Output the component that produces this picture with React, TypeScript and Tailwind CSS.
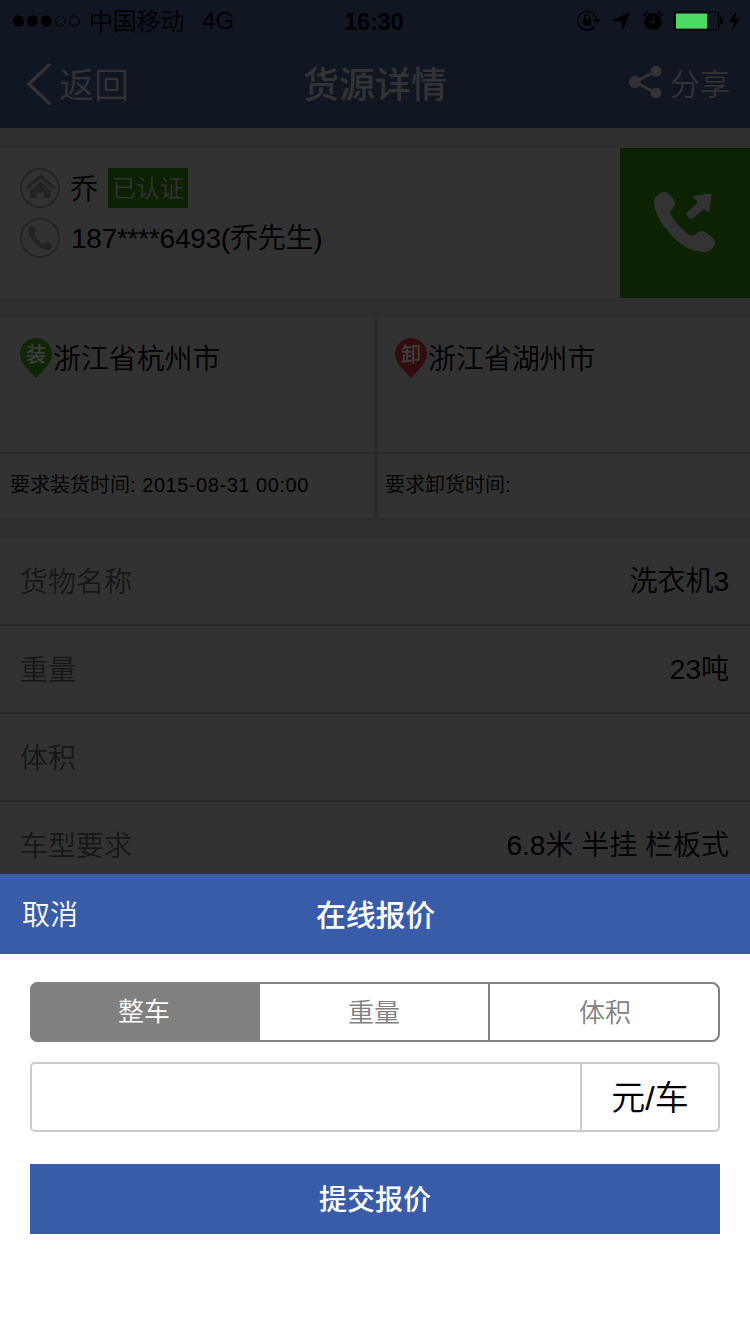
const HANDSET =
  'M4 14C4 9 9 4 14 4C19 4 22 9 24.5 13C26 17 24 20 21.5 22C19 25 21 28 26 34C31 40 36 45 39 47C43 49 45 47 47 45C50 42 54 43 57 45C61 48 65 51 65 55C65 59 60 64 54 64C46 64 34 61 22 48C10 35 4 23 4 14Z'

const details = [
  { label: '货物名称', value: '洗衣机3' },
  { label: '重量', value: '23吨' },
  { label: '体积', value: '' },
  { label: '车型要求', value: '6.8米 半挂 栏板式' },
]

function StatusBar() {
  return (
    <div className="grid h-10 grid-cols-[332px_auto_1fr] items-center pl-3 text-2xl leading-10 text-black">
      <div className="flex items-center">
        <svg width="70" height="12" viewBox="0 0 70 12">
          <circle cx="6.5" cy="6" r="5.5" />
          <circle cx="20.5" cy="6" r="5.5" />
          <circle cx="34.5" cy="6" r="5.5" />
          <circle cx="48.5" cy="6" r="5" fill="none" stroke="#000" />
          <circle cx="62.5" cy="6" r="5" fill="none" stroke="#000" />
        </svg>
        <span className="ml-[7px] pt-0.5 font-[350] tracking-[-0.2px]">中国移动</span>
        <span className="ml-[18px]">4G</span>
      </div>
      <span className="pt-px font-bold tracking-[-0.4px]">16:30</span>
      <div className="flex items-center justify-end pr-[9px]">
        <svg className="mr-[11px]" width="24" height="22" viewBox="0 0 24 22">
          <path d="M17 17A9.3 9.3 0 1 1 19.3 9" fill="none" stroke="#000" strokeWidth="1.4" />
          <path d="M16 9.5H23.5L19.8 13.5Z" />
          <rect x="6.2" y="9.2" width="8" height="6.2" rx=".5" />
          <path d="M7.9 9.5V7a2.3 2.3 0 0 1 4.6 0V9.5" fill="none" stroke="#000" strokeWidth="1.3" />
        </svg>
        <svg className="mr-3" width="19" height="20" viewBox="0 0 19 20">
          <path d="M0 9.5L18.5 1L10.5 19.5L9.5 10.5Z" />
        </svg>
        <svg className="mr-[11px]" width="20" height="20" viewBox="0 0 20 20">
          <circle cx="10" cy="10.5" r="8.5" />
          <path d="M.8 5Q1.5 1.5 5 .9M15 .9Q18.5 1.5 19.2 5" fill="none" stroke="#000" strokeWidth="1.6" />
          <path d="M10.5 5.5V11H6.5" fill="none" stroke="#101722" strokeWidth="1.4" />
        </svg>
        <svg className="mr-1.5" width="49" height="20" viewBox="0 0 49 20">
          <rect x=".6" y="1" width="44" height="18" rx="2.5" fill="none" stroke="#000" strokeWidth="1.2" />
          <rect x="2" y="2.6" width="31" height="15" fill="#4cd964" />
          <path d="M46 6.5Q49 6.5 49 10T46 13.5Z" />
        </svg>
        <svg width="12" height="20" viewBox="0 0 12 20">
          <path d="M7 .5L0 11H5L3 19.5L11.5 7.5H6.2Z" />
        </svg>
      </div>
    </div>
  )
}

function Header() {
  return (
    <header className="h-32 bg-[#101722] text-[#333]">
      <StatusBar />
      <div className="grid h-22 grid-cols-[277px_auto_1fr] items-center pr-5 pl-[26px]">
        <div className="flex items-center text-[35px] font-[350]">
          <svg width="25" height="42" viewBox="0 0 25 42">
            <path d="M23 2L3 21L23 40" fill="none" stroke="currentColor" strokeWidth="3.5" strokeLinecap="round" />
          </svg>
          <span className="ml-2 pt-1">返回</span>
        </div>
        <h1 className="pt-1 text-4xl font-medium">货源详情</h1>
        <div className="flex items-center justify-end text-[30px] font-[350]">
          <svg className="mr-2 mb-1" width="33" height="34" viewBox="0 0 33 34">
            <path d="M27 6L6 17L27 28" fill="none" stroke="currentColor" strokeWidth="2.8" />
            <circle cx="6" cy="17" r="6" fill="currentColor" />
            <circle cx="27" cy="6.2" r="5.4" fill="currentColor" />
            <circle cx="27" cy="27.8" r="5.4" fill="currentColor" />
          </svg>
          <span>分享</span>
        </div>
      </div>
    </header>
  )
}

function Contact() {
  return (
    <section className="flex h-[150px] shrink-0 bg-[#323232]">
      <div className="flex flex-1 flex-col gap-2.5 pt-5 pl-5 text-[28px] leading-10 font-[350] text-black">
        <div className="flex h-10 items-center">
          <svg width="40" height="40" viewBox="0 0 40 40" fill="#212325">
            <circle cx="20" cy="20" r="19" fill="none" stroke="#242526" strokeWidth="2" />
            <path d="M7.5 19.5L20.5 8.5L33.5 19.5" fill="none" stroke="#212325" strokeWidth="3.4" strokeLinecap="round" strokeLinejoin="round" />
            <path d="M10 22.5L20.5 13.5L31 22.5V28.5Q31 30 29.5 30H24V24.5H17V30H11.5Q10 30 10 28.5Z" />
          </svg>
          <span className="ml-2.5 pt-1">乔</span>
          <span className="ml-2.5 h-10 w-20 bg-[#0d2103] text-center text-2xl leading-[42px] text-[#333]">已认证</span>
        </div>
        <div className="flex h-10 items-center">
          <svg width="40" height="40" viewBox="0 0 40 40">
            <circle cx="20" cy="20" r="19" fill="none" stroke="#242526" strokeWidth="2" />
            <path d={HANDSET} fill="#212325" transform="translate(6.4 6.4) scale(.395)" />
          </svg>
          <span className="ml-[11px] pt-0.5 tracking-[-0.25px]">187****6493(乔先生)</span>
        </div>
      </div>
      <div className="flex w-[130px] items-center justify-center bg-[#0d2103]">
        <svg width="70" height="70" viewBox="0 0 70 70" fill="#333">
          <path d={HANDSET} />
          <path d="M43.5 8L61 6L59 24L54 20.5L41 31.5L36 26L48 14.5Z" stroke="#333" strokeLinejoin="round" />
        </svg>
      </div>
    </section>
  )
}

function Pin({ color, label }: { color: string; label: string }) {
  return (
    <div className="relative h-10 w-8">
      <svg width="32" height="40" viewBox="0 0 32 40">
        <path d="M16 0A16 16 0 0 0 0 16C0 24 7 31 16 40C25 31 32 24 32 16A16 16 0 0 0 16 0Z" fill={color} />
      </svg>
      <span className="absolute inset-x-0 top-0 text-center text-[20px] leading-[34px] font-medium text-[#404040]">{label}</span>
    </div>
  )
}

function Route() {
  return (
    <section className="grid h-[200px] shrink-0 grid-cols-[375px_375px] grid-rows-[136px_64px] bg-[#323232] text-black">
      <div className="flex border-b-2 border-[#282828] pt-5 pl-5">
        <Pin color="#102505" label="装" />
        <span className="ml-px text-[28px] leading-[44px] font-[350] tracking-[-0.1px]">浙江省杭州市</span>
      </div>
      <div className="flex border-b-2 border-l-2 border-[#282828] pt-5 pl-[18px]">
        <Pin color="#330d0d" label="卸" />
        <span className="ml-px text-[28px] leading-[44px] font-[350] tracking-[-0.1px]">浙江省湖州市</span>
      </div>
      <div className="pl-2.5 text-xl leading-[63px] whitespace-nowrap">
        <span className="font-[350]">要求装货时间</span>
        <span className="tracking-[0.55px]">: 2015-08-31 00:00</span>
      </div>
      <div className="border-l-2 border-[#282828] pl-2 text-xl leading-[63px] font-[350]">要求卸货时间:</div>
    </section>
  )
}

function QuoteSheet() {
  return (
    <section className="h-[460px] shrink-0 bg-white">
      <div className="grid h-20 grid-cols-[1fr_auto_1fr] items-center bg-[#395ca8] pl-[22px] text-white">
        <span className="pt-1 text-[28px] font-[350]">取消</span>
        <h2 className="mr-[21px] pt-0.5 text-[30px] font-medium tracking-[-0.2px]">在线报价</h2>
      </div>
      <div className="px-[30px] pt-7">
        <div className="flex h-[60px] rounded-lg border-2 border-[#808080] bg-white text-center text-[26px] leading-[58px] font-[350] text-[#808080]">
          <button className="-my-0.5 -ml-0.5 w-[230px] rounded-l-lg bg-[#808080] pr-0.5 text-white">整车</button>
          <button className="w-[230px] border-r-2 border-[#808080]">重量</button>
          <button className="flex-1 pl-0.5">体积</button>
        </div>
        <div className="mt-5 flex h-[70px] rounded-[5px] border-2 border-[#ccc]">
          <input className="w-[548px] px-4 text-[34px] outline-none" aria-label="报价" />
          <div className="flex-1 border-l-2 border-[#ccc] text-center text-[34px] leading-[68px] font-[350] text-black">元/车</div>
        </div>
        <button className="mt-8 h-[70px] w-full bg-[#395ca8] pt-1 text-[28px] font-medium text-white">提交报价</button>
      </div>
    </section>
  )
}

export default function App() {
  return (
    <div className="flex h-[1334px] w-[750px] flex-col overflow-hidden bg-[#2f2f2f] font-['Liberation_Sans','Noto_Sans_CJK_SC',sans-serif]">
      <Header />
      <main className="flex h-[746px] shrink-0 flex-col gap-5 overflow-hidden pt-5">
        <Contact />
        <Route />
        <section className="shrink-0 bg-[#323232]">
          {details.map((row) => (
            <div
              key={row.label}
              className="flex h-22 justify-between border-b-2 border-[#282828] pr-[21px] pl-5 text-[28px] font-[350]"
            >
              <span className="leading-[90px] text-[#161616]">{row.label}</span>
              <span className="leading-[88px] text-black">{row.value}</span>
            </div>
          ))}
        </section>
      </main>
      <QuoteSheet />
    </div>
  )
}
